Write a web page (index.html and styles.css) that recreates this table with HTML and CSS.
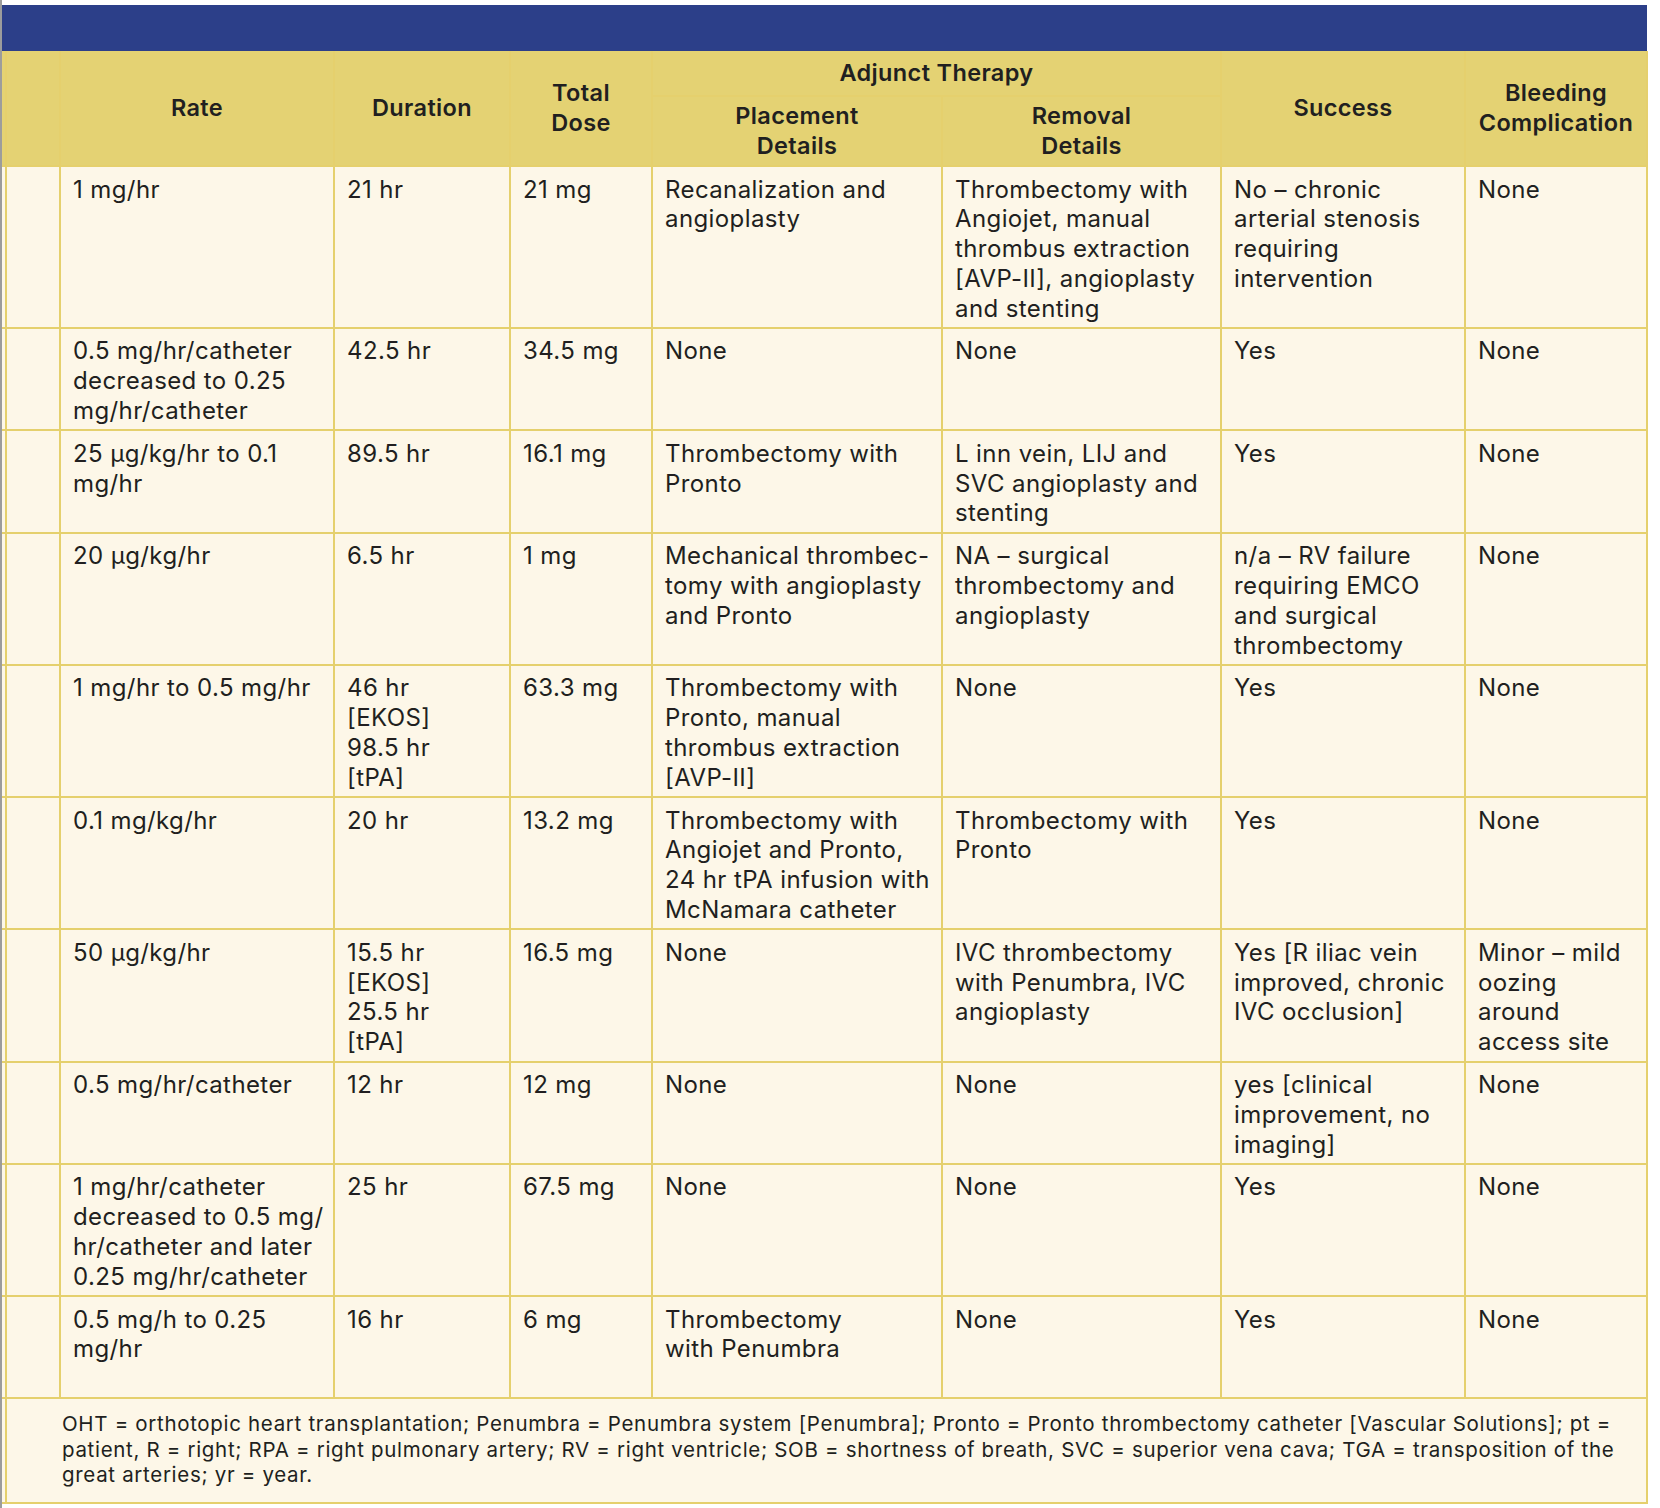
FILE: index.html
```html
<!DOCTYPE html>
<html lang="en">
<head>
<meta charset="utf-8">
<title>Thrombolysis table</title>
<link rel="stylesheet" href="styles.css">
</head>
<body>
<div class="page">
  <div class="title-bar"></div>
  <div class="grid">
    <div class="th sliver"></div>
    <div class="th"></div>
    <div class="th">Rate</div>
    <div class="th">Duration</div>
    <div class="th">Total<br>Dose</div>
    <div class="th group">Adjunct Therapy</div>
    <div class="th">Success</div>
    <div class="th">Bleeding<br>Complication</div>
    <div class="th sub">Placement<br>Details</div>
    <div class="th sub">Removal<br>Details</div>

    <div class="td sliver"></div><div class="td"></div>
    <div class="td">1 mg/hr</div>
    <div class="td">21 hr</div>
    <div class="td">21 mg</div>
    <div class="td">Recanalization and<br>angioplasty</div>
    <div class="td">Thrombectomy with<br>Angiojet, manual<br>thrombus extraction<br>[AVP-II], angioplasty<br>and stenting</div>
    <div class="td">No – chronic<br>arterial stenosis<br>requiring<br>intervention</div>
    <div class="td">None</div>

    <div class="td sliver"></div><div class="td"></div>
    <div class="td">0.5 mg/hr/catheter<br>decreased to 0.25<br>mg/hr/catheter</div>
    <div class="td">42.5 hr</div>
    <div class="td">34.5 mg</div>
    <div class="td">None</div>
    <div class="td">None</div>
    <div class="td">Yes</div>
    <div class="td">None</div>

    <div class="td sliver"></div><div class="td"></div>
    <div class="td">25 µg/kg/hr to 0.1<br>mg/hr</div>
    <div class="td">89.5 hr</div>
    <div class="td">16.1 mg</div>
    <div class="td">Thrombectomy with<br>Pronto</div>
    <div class="td">L inn vein, LIJ and<br>SVC angioplasty and<br>stenting</div>
    <div class="td">Yes</div>
    <div class="td">None</div>

    <div class="td sliver"></div><div class="td"></div>
    <div class="td">20 µg/kg/hr</div>
    <div class="td">6.5 hr</div>
    <div class="td">1 mg</div>
    <div class="td">Mechanical thrombec-<br>tomy with angioplasty<br>and Pronto</div>
    <div class="td">NA – surgical<br>thrombectomy and<br>angioplasty</div>
    <div class="td">n/a – RV failure<br>requiring EMCO<br>and surgical<br>thrombectomy</div>
    <div class="td">None</div>

    <div class="td sliver"></div><div class="td"></div>
    <div class="td">1 mg/hr to 0.5 mg/hr</div>
    <div class="td">46 hr<br>[EKOS]<br>98.5 hr<br>[tPA]</div>
    <div class="td">63.3 mg</div>
    <div class="td">Thrombectomy with<br>Pronto, manual<br>thrombus extraction<br>[AVP-II]</div>
    <div class="td">None</div>
    <div class="td">Yes</div>
    <div class="td">None</div>

    <div class="td sliver"></div><div class="td"></div>
    <div class="td">0.1 mg/kg/hr</div>
    <div class="td">20 hr</div>
    <div class="td">13.2 mg</div>
    <div class="td">Thrombectomy with<br>Angiojet and Pronto,<br>24 hr tPA infusion with<br>McNamara catheter</div>
    <div class="td">Thrombectomy with<br>Pronto</div>
    <div class="td">Yes</div>
    <div class="td">None</div>

    <div class="td sliver"></div><div class="td"></div>
    <div class="td">50 µg/kg/hr</div>
    <div class="td">15.5 hr<br>[EKOS]<br>25.5 hr<br>[tPA]</div>
    <div class="td">16.5 mg</div>
    <div class="td">None</div>
    <div class="td">IVC thrombectomy<br>with Penumbra, IVC<br>angioplasty</div>
    <div class="td">Yes [R iliac vein<br>improved, chronic<br>IVC occlusion]</div>
    <div class="td">Minor – mild<br>oozing<br>around<br>access site</div>

    <div class="td sliver"></div><div class="td"></div>
    <div class="td">0.5 mg/hr/catheter</div>
    <div class="td">12 hr</div>
    <div class="td">12 mg</div>
    <div class="td">None</div>
    <div class="td">None</div>
    <div class="td">yes [clinical<br>improvement, no<br>imaging]</div>
    <div class="td">None</div>

    <div class="td sliver"></div><div class="td"></div>
    <div class="td">1 mg/hr/catheter<br>decreased to 0.5 mg/<br>hr/catheter and later<br>0.25 mg/hr/catheter</div>
    <div class="td">25 hr</div>
    <div class="td">67.5 mg</div>
    <div class="td">None</div>
    <div class="td">None</div>
    <div class="td">Yes</div>
    <div class="td">None</div>

    <div class="td sliver"></div><div class="td min3"></div>
    <div class="td">0.5 mg/h to 0.25<br>mg/hr</div>
    <div class="td">16 hr</div>
    <div class="td">6 mg</div>
    <div class="td">Thrombectomy<br>with Penumbra</div>
    <div class="td">None</div>
    <div class="td">Yes</div>
    <div class="td">None</div>

    <div class="td sliver"></div>
    <div class="foot">OHT = orthotopic heart transplantation; Penumbra = Penumbra system [Penumbra]; Pronto = Pronto thrombectomy catheter [Vascular Solutions]; pt =<br>patient, R = right; RPA = right pulmonary artery; RV = right ventricle; SOB = shortness of breath, SVC = superior vena cava; TGA = transposition of the<br>great arteries; yr = year.</div>
  </div>
</div>
</body>
</html>
```

FILE: styles.css
```css
html, body {
  margin: 0;
  padding: 0;
  background: #ffffff;
}

body {
  font-family: Inter, "Open Sans", "Liberation Sans", sans-serif;
  color: #211f20;
}

.page {
  box-sizing: border-box;
  min-height: 1508px;
  padding-top: 5px;
  border-left: 2px solid #9c9c9c;
  width: 1648px;
}

.title-bar {
  width: 1645px;
  height: 46px;
  background: #2c3f89;
}

.grid {
  display: grid;
  width: fit-content;
  grid-template-columns: 3px 52px 272px 174px 140px 288px 277px 242px 180px;
  grid-template-rows: 44px 68px;
  grid-auto-rows: auto;
  gap: 2px;
  padding: 0 2px 2px 0;
  background: #e5d06d;
}

.th {
  grid-row: span 2;
  background: #e4d273;
  display: flex;
  align-items: center;
  justify-content: center;
  text-align: center;
  font-size: 23.5px;
  font-weight: 600;
  line-height: 29.6px;
  letter-spacing: 0.35px;
}

.th.group {
  grid-row: span 1;
  grid-column: span 2;
}

.th.sub {
  grid-row: span 1;
}

.td {
  background: #fdf7e8;
  box-sizing: border-box;
  padding: 7.5px 6px 3.5px 12px;
  font-size: 24px;
  line-height: 29.8px;
  letter-spacing: 0.4px;
  white-space: nowrap;
}

.sliver {
  padding: 0;
}

.min3 {
  min-height: 100.4px;
}

.foot {
  grid-column: 2 / -1;
  background: #fdf7e8;
  padding: 12px 10px 15px 55px;
  font-size: 20.5px;
  line-height: 25.3px;
  letter-spacing: 0.68px;
  white-space: nowrap;
}
```
